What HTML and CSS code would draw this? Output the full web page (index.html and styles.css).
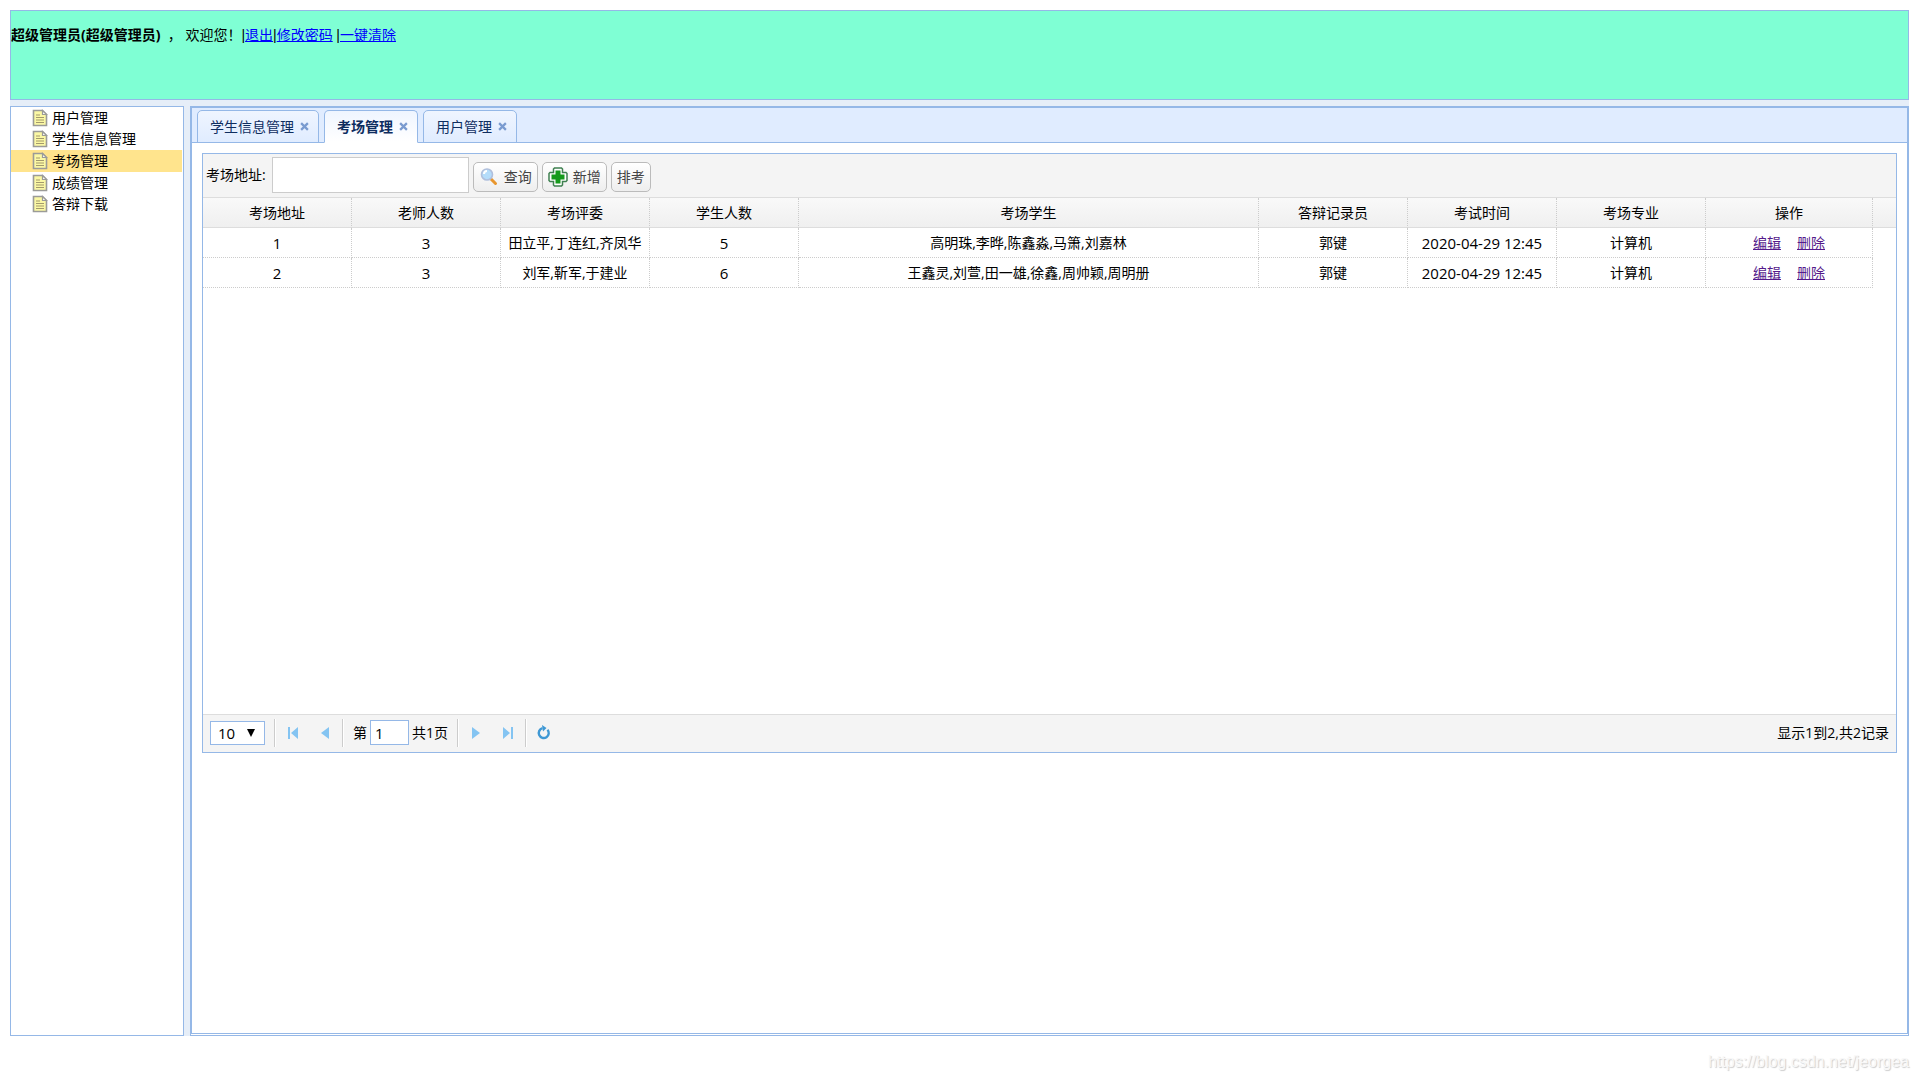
FILE: index.html
```html
<!DOCTYPE html>
<html lang="zh-CN">
<head>
<meta charset="utf-8">
<title>考场管理</title>
<link rel="stylesheet" href="styles.css">
</head>
<body>
<svg class="defs" width="0" height="0" aria-hidden="true">
  <symbol id="doc" viewBox="0 0 16 18"><path d="M1.500 1.500h9l4 4v11h-13z" fill="#fbf8a4" stroke="#9b9b98" stroke-width="1.600"/><path d="M10.500 1.500v4h4z" fill="#fff" stroke="#9b9b98" stroke-width="1.200"/><path d="M4 6h4M4 8.500h8M4 11h8M4 13.500h8" stroke="#a39a6c" stroke-width="1.200"/></symbol>
</svg>
<header class="top">
  <strong>超级管理员(超级管理员)</strong>&nbsp; ， 欢迎您！<span class="bar">|</span><a href="#">退出</a><span class="bar">|</span><a href="#">修改密码</a> <span class="bar">|</span><a href="#">一键清除</a>
</header>
<div class="layout">
  <nav class="side">
    <div class="menu">
      <a href="#"><svg><use href="#doc"/></svg>用户管理</a>
      <a href="#"><svg><use href="#doc"/></svg>学生信息管理</a>
      <a href="#" class="current"><svg><use href="#doc"/></svg>考场管理</a>
      <a href="#"><svg><use href="#doc"/></svg>成绩管理</a>
      <a href="#"><svg><use href="#doc"/></svg>答辩下载</a>
    </div>
  </nav>
  <main class="center">
    <div class="workspace">
      <div class="tabs">
        <div class="tab"><button>学生信息管理</button><button class="close" aria-label="关闭"><svg viewBox="0 0 8 8"><path d="M1 1l6 6M7 1L1 7"/></svg></button></div>
        <div class="tab active"><button>考场管理</button><button class="close" aria-label="关闭"><svg viewBox="0 0 8 8"><path d="M1 1l6 6M7 1L1 7"/></svg></button></div>
        <div class="tab"><button>用户管理</button><button class="close" aria-label="关闭"><svg viewBox="0 0 8 8"><path d="M1 1l6 6M7 1L1 7"/></svg></button></div>
      </div>
      <section class="grid">
        <form class="toolbar">
          <label for="addr">考场地址:</label>
          <input id="addr" type="text">
          <button type="button" class="btn"><svg viewBox="0 0 20 20"><path d="M12 12l4.500 4.500" stroke="#e8962e" stroke-width="3" stroke-linecap="round"/><circle cx="8" cy="7.500" r="5.500" fill="#b4dcfa" stroke="#b0bfdc" stroke-width="1.600"/><path d="M5 7a3 3 0 0 1 3-3" fill="none" stroke="#fff" stroke-width="2"/></svg>查询</button>
          <button type="button" class="btn"><svg viewBox="0 0 20 20"><path d="M6.500 1h7l1 1v3.500H18l1 1v7l-1 1h-3.500V18l-1 1h-7l-1-1v-3.500H2l-1-1v-7l1-1h3.500V2z" fill="#fff" stroke="#3f8050" stroke-width="1.500"/><path d="M7.500 3.500h5v4h4v5h-4v4h-5v-4h-4v-5h4z" fill="#169a1c"/></svg>新增</button>
          <button type="button" class="btn">排考</button>
        </form>
        <div class="view">
          <table>
            <colgroup><col class="n"><col class="n"><col class="n"><col class="n"><col><col class="n"><col class="n"><col class="n"><col class="ops"><col class="scroll"></colgroup>
            <thead><tr><th>考场地址</th><th>老师人数</th><th>考场评委</th><th>学生人数</th><th>考场学生</th><th>答辩记录员</th><th>考试时间</th><th>考场专业</th><th>操作</th><td></td></tr></thead>
            <tbody>
              <tr><td class="num">1</td><td class="num">3</td><td>田立平,丁连红,齐凤华</td><td class="num">5</td><td>高明珠,李晔,陈鑫淼,马箫,刘嘉林</td><td>郭键</td><td class="num">2020-04-29 12:45</td><td>计算机</td><td><a href="#">编辑</a><a href="#">删除</a></td><td></td></tr>
              <tr><td class="num">2</td><td class="num">3</td><td>刘军,靳军,于建业</td><td class="num">6</td><td>王鑫灵,刘萱,田一雄,徐鑫,周帅颖,周明册</td><td>郭键</td><td class="num">2020-04-29 12:45</td><td>计算机</td><td><a href="#">编辑</a><a href="#">删除</a></td><td></td></tr>
            </tbody>
          </table>
        </div>
        <footer class="pager">
          <div class="size"><select aria-label="每页记录数"><option>10</option><option>20</option></select><svg viewBox="0 0 8 8"><path d="M0 0h8L4 8z"/></svg></div>
          <i></i>
          <button aria-label="首页"><svg viewBox="0 0 16 16"><path d="M3 2h2v12H3zM13 2v12L6 8z"/></svg></button>
          <button aria-label="上一页"><svg viewBox="0 0 16 16"><path d="M12 2v12L4 8z"/></svg></button>
          <i></i>
          <label for="page">第</label><input id="page" type="text" value="1"><span>共1页</span>
          <i></i>
          <button aria-label="下一页"><svg viewBox="0 0 16 16"><path d="M4 2v12l8-6z"/></svg></button>
          <button aria-label="末页"><svg viewBox="0 0 16 16"><path d="M11 2h2v12h-2zM3 2v12l7-6z"/></svg></button>
          <i></i>
          <button aria-label="刷新"><svg viewBox="0 0 16 16"><path d="M11.500 4.700a5 5 0 1 1-5-1.500" fill="none" stroke="#3f98d4" stroke-width="2.400"/><path d="M6 0l4.500 3L7 6.500z" fill="#3f98d4"/></svg></button>
          <output>显示1到2,共2记录</output>
        </footer>
      </section>
    </div>
  </main>
</div>
<p class="mark">https://blog.csdn.net/jeorgea</p>
</body>
</html>
```
FILE: styles.css
```css
* { box-sizing: border-box; }
body { margin: 0; padding: 10px 11px 0 10px; background: #fff; color: #000; font: 14px/20px "Open Sans", "Noto Sans CJK SC", sans-serif; }
button, input, select { font: inherit; color: inherit; margin: 0; }
.defs { position: absolute; }
.top { height: 90px; padding-top: 14px; border: 1px solid #95b8e7; background: #7fffd4; }
.top a { color: #00f; }
.bar { font-family: "Liberation Sans", sans-serif; }
.layout { display: flex; gap: 6px; padding-top: 6px; background: #e6eef8; min-height: calc(100vh - 144px); }
.side { width: 174px; border: 1px solid #95b8e7; background: #fff; }
.menu { display: grid; grid-auto-rows: 1fr; height: 108px; }
.side a { display: flex; align-items: center; gap: 4px; margin-right: 1px; padding-left: 21px; color: #000; text-decoration: none; }
.side .current { background: #ffe48d; }
.side svg { width: 16px; height: 18px; }
.center { flex: 1; display: flex; border: 1px solid #95b8e7; background: #fff; padding-bottom: 1px; }
.workspace { flex: 1; min-width: 0; border: 1px solid #95b8e7; }
.tabs { display: flex; gap: 5px; height: 35px; padding: 2px 5px 0; background: #e0ecff; border-bottom: 1px solid #95b8e7; }
.tab { display: flex; align-items: center; gap: 6px; height: 33px; padding: 0 8px 0 12px; border: 1px solid #95b8e7; border-bottom-width: 1px; border-radius: 5px 5px 0 0; background: linear-gradient(#eff5ff, #e0ecff); color: #0e2d5f; }
.tab button { padding: 0; border: 0; background: none; }
.tab .close { width: 10px; height: 20px; }
.close svg { display: block; width: 9px; height: 9px; stroke: #7a9bd0; stroke-width: 2; }
.active { background: linear-gradient(#eff5ff, #fff); border-bottom-color: #fff; font-weight: bold; }
.grid { margin: 10px; border: 1px solid #95b8e7; }
.toolbar { display: flex; align-items: center; gap: 4px; height: 44px; padding: 0 3px 2px; background: #f4f4f4; border-bottom: 1px solid #ddd; }
.toolbar label { margin-right: 2px; }
.toolbar input { width: 197px; height: 36px; padding: 0 6px; border: 1px solid #ccc; background: #fff; }
.btn { display: flex; align-items: center; gap: 5px; height: 30px; margin-top: 4px; padding: 0 5px; border: 1px solid #bbb; border-radius: 5px; background: linear-gradient(#fff, #eee); color: #444; }
.btn svg { width: 20px; height: 20px; }
.view { height: 516px; }
table { width: 100%; table-layout: fixed; border-collapse: separate; border-spacing: 0; }
.n { width: 149px; }
.ops { width: 167px; }
.scroll { width: 23px; }
th, td { height: 30px; padding: 0; border: dotted #ccc; border-width: 0 1px 1px 0; font-weight: normal; text-align: center; white-space: nowrap; }
thead tr { background: linear-gradient(#f9f9f9, #efefef); }
thead th, thead td { border-bottom: 1px solid #ddd; }
.num { font-size: 15px; }
td:last-child { border-right: 0; }
tbody td:last-child { border: 0; }
td a { margin: 0 8px; color: #551a8b; }
.pager { display: flex; align-items: center; height: 38px; padding: 0 7px 2px; background: #f4f4f4; border-top: 1px solid #ddd; }
.size { position: relative; }
.size select { display: block; appearance: none; width: 55px; height: 24px; padding: 0 7px; border: 1px solid #95b8e7; border-radius: 0; background: #fff; font-size: 15px; }
.size svg { position: absolute; top: 8px; right: 10px; width: 8px; height: 8px; fill: #000; pointer-events: none; }
.pager i { width: 2px; height: 28px; margin: 0 9px; background: linear-gradient(90deg, #ccc 50%, #fff 50%); }
.pager button { display: flex; width: 16px; height: 16px; padding: 0; border: 0; background: none; }
.pager button + button { margin-left: 16px; }
.pager button svg { width: 16px; height: 16px; fill: #84c4f2; }
.pager input { width: 39px; height: 25px; margin: 0 3px; padding: 0 4px; border: 1px solid #95b8e7; background: #fff; font-size: 15px; }
.pager output { margin-left: auto; }
.mark { margin: 16px 0 0; text-align: right; font: 16px/20px "Liberation Sans", sans-serif; color: #f8f8f8; text-shadow: 1px 1px 1px #ccc; }
```
